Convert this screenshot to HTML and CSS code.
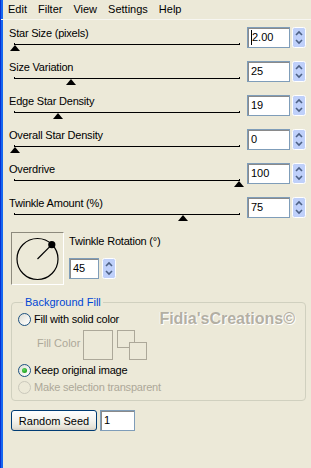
FILE: index.html
```html
<!DOCTYPE html>
<html>
<head>
<meta charset="utf-8">
<link rel="stylesheet" href="styles.css">
</head>
<body>
<div class="window">
  <div class="menubar">
    <span class="menu-item">Edit</span>
    <span class="menu-item">Filter</span>
    <span class="menu-item">View</span>
    <span class="menu-item">Settings</span>
    <span class="menu-item">Help</span>
  </div>
  <div class="content">
    <div class="sliders">
      <div class="row">
        <div class="slider-col">
          <div class="label">Star Size (pixels)</div>
          <div class="track"><span class="thumb" style="left:0%"></span></div>
        </div>
        <div class="num"><span class="caret"></span>2.00</div>
        <div class="spin"><svg width="14" height="21" viewBox="0 0 14 21"><rect x="0.5" y="0.5" width="13" height="20" rx="2" fill="#bfd0fa" stroke="#fff"/><path d="M4 8 L7 5 L10 8" fill="none" stroke="#4d6185" stroke-width="1.6"/><path d="M4 13 L7 16 L10 13" fill="none" stroke="#4d6185" stroke-width="1.6"/></svg></div>
      </div>
      <div class="row">
        <div class="slider-col">
          <div class="label">Size Variation</div>
          <div class="track"><span class="thumb" style="left:25%"></span></div>
        </div>
        <div class="num">25</div>
        <div class="spin"><svg width="14" height="21" viewBox="0 0 14 21"><rect x="0.5" y="0.5" width="13" height="20" rx="2" fill="#bfd0fa" stroke="#fff"/><path d="M4 8 L7 5 L10 8" fill="none" stroke="#4d6185" stroke-width="1.6"/><path d="M4 13 L7 16 L10 13" fill="none" stroke="#4d6185" stroke-width="1.6"/></svg></div>
      </div>
      <div class="row">
        <div class="slider-col">
          <div class="label">Edge Star Density</div>
          <div class="track"><span class="thumb" style="left:19%"></span></div>
        </div>
        <div class="num">19</div>
        <div class="spin"><svg width="14" height="21" viewBox="0 0 14 21"><rect x="0.5" y="0.5" width="13" height="20" rx="2" fill="#bfd0fa" stroke="#fff"/><path d="M4 8 L7 5 L10 8" fill="none" stroke="#4d6185" stroke-width="1.6"/><path d="M4 13 L7 16 L10 13" fill="none" stroke="#4d6185" stroke-width="1.6"/></svg></div>
      </div>
      <div class="row">
        <div class="slider-col">
          <div class="label">Overall Star Density</div>
          <div class="track"><span class="thumb" style="left:0%"></span></div>
        </div>
        <div class="num">0</div>
        <div class="spin"><svg width="14" height="21" viewBox="0 0 14 21"><rect x="0.5" y="0.5" width="13" height="20" rx="2" fill="#bfd0fa" stroke="#fff"/><path d="M4 8 L7 5 L10 8" fill="none" stroke="#4d6185" stroke-width="1.6"/><path d="M4 13 L7 16 L10 13" fill="none" stroke="#4d6185" stroke-width="1.6"/></svg></div>
      </div>
      <div class="row">
        <div class="slider-col">
          <div class="label">Overdrive</div>
          <div class="track"><span class="thumb" style="left:100%"></span></div>
        </div>
        <div class="num">100</div>
        <div class="spin"><svg width="14" height="21" viewBox="0 0 14 21"><rect x="0.5" y="0.5" width="13" height="20" rx="2" fill="#bfd0fa" stroke="#fff"/><path d="M4 8 L7 5 L10 8" fill="none" stroke="#4d6185" stroke-width="1.6"/><path d="M4 13 L7 16 L10 13" fill="none" stroke="#4d6185" stroke-width="1.6"/></svg></div>
      </div>
      <div class="row">
        <div class="slider-col">
          <div class="label">Twinkle Amount (%)</div>
          <div class="track"><span class="thumb" style="left:75%"></span></div>
        </div>
        <div class="num">75</div>
        <div class="spin"><svg width="14" height="21" viewBox="0 0 14 21"><rect x="0.5" y="0.5" width="13" height="20" rx="2" fill="#bfd0fa" stroke="#fff"/><path d="M4 8 L7 5 L10 8" fill="none" stroke="#4d6185" stroke-width="1.6"/><path d="M4 13 L7 16 L10 13" fill="none" stroke="#4d6185" stroke-width="1.6"/></svg></div>
      </div>
    </div>

    <div class="dial-row">
      <div class="dial">
        <svg width="51" height="51" viewBox="0 0 51 51">
          <circle cx="25.5" cy="26" r="20.5" fill="none" stroke="#000" stroke-width="1.2"/>
          <line x1="25.5" y1="26" x2="39.8" y2="11.7" stroke="#000" stroke-width="1.2"/>
          <circle cx="39.8" cy="11.7" r="3.6" fill="#000"/>
        </svg>
      </div>
      <div class="dial-side">
        <div class="label">Twinkle Rotation (°)</div>
        <div class="num-group">
          <div class="num num-short">45</div>
          <div class="spin spin-dial"><svg width="14" height="21" viewBox="0 0 14 21"><rect x="0.5" y="0.5" width="13" height="20" rx="2" fill="#bfd0fa" stroke="#fff"/><path d="M4 8 L7 5 L10 8" fill="none" stroke="#4d6185" stroke-width="1.6"/><path d="M4 13 L7 16 L10 13" fill="none" stroke="#4d6185" stroke-width="1.6"/></svg></div>
        </div>
      </div>
    </div>

    <fieldset class="group">
      <legend class="group-title">Background Fill</legend>
      <div class="radio-row">
        <span class="radio"></span>
        <span class="radio-text">Fill with solid color</span>
        <span class="watermark">Fidia'sCreations©</span>
      </div>
      <div class="fill-row">
        <span class="fill-label">Fill Color</span>
        <span class="swatch"></span>
        <span class="swap">
          <span class="sq sq-back"></span>
          <span class="sq sq-front"></span>
        </span>
      </div>
      <div class="radio-row row-keep">
        <span class="radio checked"></span>
        <span class="radio-text">Keep original image</span>
      </div>
      <div class="radio-row row-transparent">
        <span class="radio disabled"></span>
        <span class="radio-text text-disabled">Make selection transparent</span>
      </div>
    </fieldset>

    <div class="seed-row">
      <button class="btn">Random Seed</button>
      <div class="num num-seed">1</div>
    </div>
  </div>
</div>
</body>
</html>
```

FILE: styles.css
```css
* { box-sizing: border-box; }

html, body {
  margin: 0;
  padding: 0;
}

body {
  width: 311px;
  height: 468px;
  overflow: hidden;
  background: #ece9d8;
  font-family: "Liberation Sans", Arial, sans-serif;
  font-size: 11px;
  color: #000;
}

.window {
  width: 311px;
  height: 468px;
  border-left: 1px solid #0a2fd0;
  box-shadow: inset 2px 0 0 #1566f0;
  background: #ece9d8;
}

.menubar {
  height: 20px;
  display: flex;
  align-items: center;
  gap: 11px;
  padding-left: 7px;
  line-height: 19px;
  border-bottom: 1px solid #f7f6f1;
}

.menu-item { white-space: nowrap; }

.content {
  padding: 7px 5px 0 8px;
}

.row {
  display: flex;
  height: 34px;
}

.slider-col {
  flex: 1;
  display: flex;
  flex-direction: column;
}

.label {
  line-height: 13px;
  white-space: nowrap;
  letter-spacing: -0.2px;
}

.track {
  position: relative;
  margin: 3px 4px 0 5px;
  height: 2px;
  border: 1px solid #000;
  border-top: none;
}

.thumb {
  position: absolute;
  top: 100%;
  margin-top: 1px;
  margin-left: -5px;
  width: 0;
  height: 0;
  border-left: 5px solid transparent;
  border-right: 5px solid transparent;
  border-bottom: 6px solid #000;
}

.num {
  width: 43px;
  height: 21px;
  margin-left: 3px;
  border: 1px solid #7f9db9;
  box-shadow: inset 1px 1px 0 #8a8a8a;
  background: #fff;
  padding-left: 3px;
  line-height: 19px;
  display: flex;
  align-items: center;
}

.caret {
  display: inline-block;
  width: 1px;
  height: 15px;
  background: #000;
  margin-right: 0;
}

.spin {
  width: 14px;
  height: 21px;
  margin-left: 2px;
  display: flex;
}

.dial-row {
  display: flex;
  margin-top: 1px;
}

.dial {
  width: 53px;
  height: 53px;
  margin-left: 2px;
  border: 1px solid;
  border-color: #8d8a7d #fff #fff #8d8a7d;
  display: flex;
}

.dial-side {
  margin-left: 5px;
  display: flex;
  flex-direction: column;
}

.dial-side .label {
  margin-top: 3px;
}

.num-group {
  display: flex;
  margin-top: 10px;
}

.num-short {
  width: 30px;
  margin-left: 0;
}

.spin-dial { margin-left: 3px; }

.group {
  margin: 11px 0 0 2px;
  padding: 2px 0 5px 6px;
  border: 1px solid #d0d0bf;
  border-radius: 4px;
  min-width: 0;
}

.group-title {
  margin-left: 5px;
  padding: 0 2px;
  line-height: 13px;
  color: #0046d5;
}

.radio-row {
  display: flex;
  align-items: center;
  height: 16px;
}

.radio {
  width: 13px;
  height: 13px;
  border-radius: 50%;
  border: 1px solid #1c5180;
  background: linear-gradient(135deg, #dcdcd4 0%, #f4f4f0 60%, #ffffff 100%);
  position: relative;
  flex: none;
}

.radio.checked::after {
  content: "";
  position: absolute;
  left: 3px;
  top: 3px;
  width: 5px;
  height: 5px;
  border-radius: 50%;
  background: radial-gradient(circle at 40% 35%, #5fd85f 0%, #21a121 70%);
}

.radio.disabled {
  border-color: #cac8bb;
  background: #ece9d8;
}

.radio-text {
  margin-left: 3px;
  line-height: 13px;
  white-space: nowrap;
  letter-spacing: -0.2px;
}

.text-disabled { color: #aca899; }

.watermark {
  margin-left: auto;
  margin-right: 10px;
  font-size: 16px;
  font-weight: bold;
  letter-spacing: 0;
  line-height: 18px;
  color: #b3afa3;
  text-shadow: 1px 1px 0 #ffffff, -1px 0 0 #f6f5ef;
  white-space: nowrap;
}

.fill-row {
  display: flex;
  margin-top: 3px;
  padding-left: 19px;
  height: 30px;
}

.fill-label {
  width: 46px;
  margin-top: 7px;
  line-height: 13px;
  color: #aca899;
  white-space: nowrap;
}

.swatch {
  width: 30px;
  height: 30px;
  border: 1px solid #aca899;
}

.swap {
  position: relative;
  width: 30px;
  height: 30px;
  margin-left: 4px;
}

.sq {
  position: absolute;
  width: 18px;
  height: 18px;
  border: 1px solid #aca899;
  background: #ece9d8;
}

.sq-back { left: 0; top: 0; }
.sq-front { left: 12px; top: 12px; }

.row-keep { margin-top: 2px; }
.row-transparent { margin-top: 1px; }

.seed-row {
  display: flex;
  margin-top: 9px;
  padding-left: 2px;
}

.btn {
  width: 86px;
  height: 21px;
  margin: 0;
  padding: 0;
  border: 1px solid #003c74;
  border-radius: 3px;
  background: linear-gradient(#ffffff 0%, #f4f3ee 50%, #e6e3d8 85%, #d6d0c5 100%);
  font-family: "Liberation Sans", Arial, sans-serif;
  font-size: 11px;
  color: #000;
}

.num-seed {
  width: 35px;
  margin-left: 3px;
}
```
